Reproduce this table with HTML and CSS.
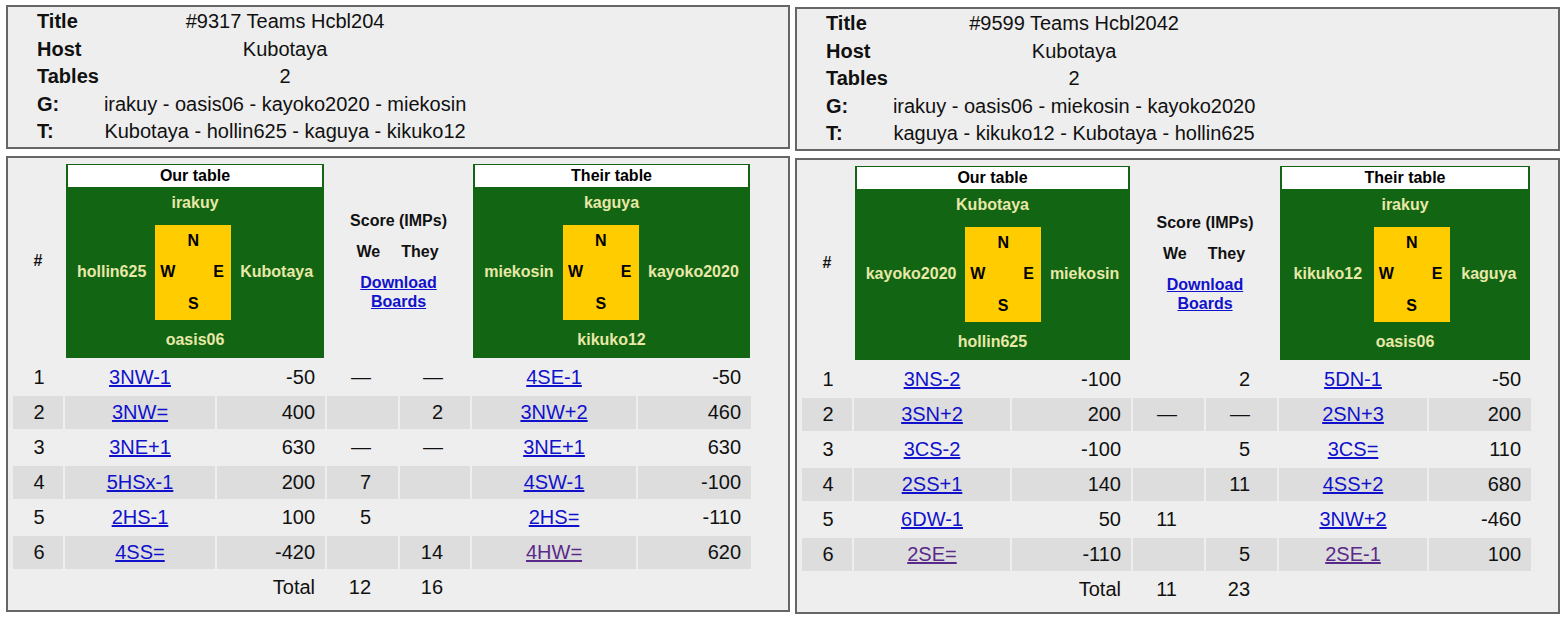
FILE: index.html
```html
<!DOCTYPE html>
<html>
<head>
<meta charset="utf-8">
<title>Teams results</title>
<link rel="stylesheet" href="styles.css">
</head>
<body>
<div class="page">
  <section class="col col-left">
    <div class="info">
      <table class="info-table">
        <tr><th>Title</th><td>#9317 Teams Hcbl204</td></tr>
        <tr><th>Host</th><td>Kubotaya</td></tr>
        <tr><th>Tables</th><td>2</td></tr>
        <tr><th>G:</th><td>irakuy - oasis06 - kayoko2020 - miekosin</td></tr>
        <tr><th>T:</th><td>Kubotaya - hollin625 - kaguya - kikuko12</td></tr>
      </table>
    </div>
    <div class="board">
      <table class="results res-left">
        <colgroup>
          <col class="w-num"><col class="w-con1"><col class="w-pts1"><col class="w-we"><col class="w-they"><col class="w-con2"><col class="w-pts2">
        </colgroup>
        <tr class="head">
          <th class="hash">#</th>
          <td colspan="2" class="seatcell">
            <div class="seat">
              <div class="seat-title">Our table</div>
              <div class="seat-n">irakuy</div>
              <div class="seat-mid"><span>hollin625</span><div class="compass"><b class="cn">N</b><b class="cw">W</b><b class="ce">E</b><b class="cs">S</b></div><span>Kubotaya</span></div>
              <div class="seat-s">oasis06</div>
            </div>
          </td>
          <td colspan="2" class="score-head">
            <div class="sh-title">Score (IMPs)</div>
            <div class="sh-sides"><span>We</span><span>They</span></div>
            <a class="dl" href="#">Download<br>Boards</a>
          </td>
          <td colspan="2" class="seatcell">
            <div class="seat">
              <div class="seat-title">Their table</div>
              <div class="seat-n">kaguya</div>
              <div class="seat-mid"><span>miekosin</span><div class="compass"><b class="cn">N</b><b class="cw">W</b><b class="ce">E</b><b class="cs">S</b></div><span>kayoko2020</span></div>
              <div class="seat-s">kikuko12</div>
            </div>
          </td>
        </tr>
        <tr><td class="n">1</td><td class="con"><a href="#">3NW-1</a></td><td class="pts">-50</td><td class="imp">—</td><td class="imp">—</td><td class="con"><a href="#">4SE-1</a></td><td class="pts">-50</td></tr>
        <tr class="alt"><td class="n">2</td><td class="con"><a href="#">3NW=</a></td><td class="pts">400</td><td class="imp"></td><td class="imp">2</td><td class="con"><a href="#">3NW+2</a></td><td class="pts">460</td></tr>
        <tr><td class="n">3</td><td class="con"><a href="#">3NE+1</a></td><td class="pts">630</td><td class="imp">—</td><td class="imp">—</td><td class="con"><a href="#">3NE+1</a></td><td class="pts">630</td></tr>
        <tr class="alt"><td class="n">4</td><td class="con"><a href="#">5HSx-1</a></td><td class="pts">200</td><td class="imp">7</td><td class="imp"></td><td class="con"><a href="#">4SW-1</a></td><td class="pts">-100</td></tr>
        <tr><td class="n">5</td><td class="con"><a href="#">2HS-1</a></td><td class="pts">100</td><td class="imp">5</td><td class="imp"></td><td class="con"><a href="#">2HS=</a></td><td class="pts">-110</td></tr>
        <tr class="alt"><td class="n">6</td><td class="con"><a href="#">4SS=</a></td><td class="pts">-420</td><td class="imp"></td><td class="imp">14</td><td class="con"><a class="visited" href="#">4HW=</a></td><td class="pts">620</td></tr>
        <tr><td></td><td></td><td class="pts">Total</td><td class="imp">12</td><td class="imp">16</td><td></td><td></td></tr>
      </table>
    </div>
  </section>

  <section class="col col-right">
    <div class="info">
      <table class="info-table">
        <tr><th>Title</th><td>#9599 Teams Hcbl2042</td></tr>
        <tr><th>Host</th><td>Kubotaya</td></tr>
        <tr><th>Tables</th><td>2</td></tr>
        <tr><th>G:</th><td>irakuy - oasis06 - miekosin - kayoko2020</td></tr>
        <tr><th>T:</th><td>kaguya - kikuko12 - Kubotaya - hollin625</td></tr>
      </table>
    </div>
    <div class="board">
      <table class="results res-right">
        <colgroup>
          <col class="w-num"><col class="w-con1"><col class="w-pts1"><col class="w-we"><col class="w-they"><col class="w-con2"><col class="w-pts2">
        </colgroup>
        <tr class="head">
          <th class="hash">#</th>
          <td colspan="2" class="seatcell">
            <div class="seat">
              <div class="seat-title">Our table</div>
              <div class="seat-n">Kubotaya</div>
              <div class="seat-mid"><span>kayoko2020</span><div class="compass"><b class="cn">N</b><b class="cw">W</b><b class="ce">E</b><b class="cs">S</b></div><span>miekosin</span></div>
              <div class="seat-s">hollin625</div>
            </div>
          </td>
          <td colspan="2" class="score-head">
            <div class="sh-title">Score (IMPs)</div>
            <div class="sh-sides"><span>We</span><span>They</span></div>
            <a class="dl" href="#">Download<br>Boards</a>
          </td>
          <td colspan="2" class="seatcell">
            <div class="seat">
              <div class="seat-title">Their table</div>
              <div class="seat-n">irakuy</div>
              <div class="seat-mid"><span>kikuko12</span><div class="compass"><b class="cn">N</b><b class="cw">W</b><b class="ce">E</b><b class="cs">S</b></div><span>kaguya</span></div>
              <div class="seat-s">oasis06</div>
            </div>
          </td>
        </tr>
        <tr><td class="n">1</td><td class="con"><a href="#">3NS-2</a></td><td class="pts">-100</td><td class="imp"></td><td class="imp">2</td><td class="con"><a href="#">5DN-1</a></td><td class="pts">-50</td></tr>
        <tr class="alt"><td class="n">2</td><td class="con"><a href="#">3SN+2</a></td><td class="pts">200</td><td class="imp">—</td><td class="imp">—</td><td class="con"><a href="#">2SN+3</a></td><td class="pts">200</td></tr>
        <tr><td class="n">3</td><td class="con"><a href="#">3CS-2</a></td><td class="pts">-100</td><td class="imp"></td><td class="imp">5</td><td class="con"><a href="#">3CS=</a></td><td class="pts">110</td></tr>
        <tr class="alt"><td class="n">4</td><td class="con"><a href="#">2SS+1</a></td><td class="pts">140</td><td class="imp"></td><td class="imp">11</td><td class="con"><a href="#">4SS+2</a></td><td class="pts">680</td></tr>
        <tr><td class="n">5</td><td class="con"><a href="#">6DW-1</a></td><td class="pts">50</td><td class="imp">11</td><td class="imp"></td><td class="con"><a href="#">3NW+2</a></td><td class="pts">-460</td></tr>
        <tr class="alt"><td class="n">6</td><td class="con"><a class="visited" href="#">2SE=</a></td><td class="pts">-110</td><td class="imp"></td><td class="imp">5</td><td class="con"><a class="visited" href="#">2SE-1</a></td><td class="pts">100</td></tr>
        <tr><td></td><td></td><td class="pts">Total</td><td class="imp">11</td><td class="imp">23</td><td></td><td></td></tr>
      </table>
    </div>
  </section>
</div>
</body>
</html>
```

FILE: styles.css
```css
html, body {
  margin: 0;
  padding: 0;
  background: #ffffff;
}

body {
  font-family: "Liberation Sans", Arial, sans-serif;
  color: #111;
}

.page {
  display: flex;
  align-items: flex-start;
  gap: 5px;
  padding: 5px 0 0 6px;
}

.col {
  display: flex;
  flex-direction: column;
  gap: 7px;
}

.col-left { width: 784px; }
.col-right { width: 765px; margin-top: 2px; }

.info,
.board {
  background: #eeeeee;
  border: 2px solid #666666;
}

.info {
  padding: 1px 0 1px 29px;
}

.info-table {
  border-collapse: collapse;
  font-size: 20px;
  line-height: 27.5px;
}

.info-table th {
  text-align: left;
  font-weight: bold;
  padding: 0 5px 0 0;
}

.info-table td {
  text-align: center;
  padding: 0;
}

.board {
  padding: 3px 3px 4px 3px;
}

.results {
  table-layout: fixed;
  border-collapse: separate;
  border-spacing: 2px;
  font-size: 20px;
}

.res-left { width: 742px; }
.res-right { width: 733px; }

.res-left .w-num { width: 50px; }
.res-left .w-con1 { width: 150px; }
.res-left .w-pts1 { width: 108px; }
.res-left .w-we { width: 71px; }
.res-left .w-they { width: 70px; }
.res-left .w-con2 { width: 164px; }
.res-left .w-pts2 { width: 113px; }

.res-right .w-num { width: 50px; }
.res-right .w-con1 { width: 156px; }
.res-right .w-pts1 { width: 119px; }
.res-right .w-we { width: 71px; }
.res-right .w-they { width: 71px; }
.res-right .w-con2 { width: 148px; }
.res-right .w-pts2 { width: 102px; }

.results td,
.results th {
  padding: 0;
  height: 33px;
  vertical-align: middle;
}

.results .head th,
.results .head td {
  height: auto;
}

.hash {
  font-size: 16px;
  font-weight: bold;
  text-align: center;
}

.seatcell {
  padding: 1px !important;
}

.seat {
  background: #126512;
  height: 194px;
  box-sizing: border-box;
  padding: 1px 2px 2px 2px;
  display: flex;
  flex-direction: column;
  font-size: 16px;
  font-weight: bold;
  color: #e8e8a8;
}

.seat-title {
  background: #ffffff;
  color: #000;
  height: 22px;
  line-height: 22px;
  text-align: center;
}

.seat-n {
  height: 38px;
  box-sizing: border-box;
  padding-bottom: 6px;
  display: flex;
  align-items: center;
  justify-content: center;
}

.seat-mid {
  height: 95px;
  display: flex;
  align-items: center;
  justify-content: space-evenly;
}

.seat-s {
  flex: 1;
  padding-top: 4px;
  display: flex;
  align-items: center;
  justify-content: center;
}

.compass {
  width: 76px;
  height: 95px;
  background: #ffcc00;
  color: #000;
  display: grid;
  grid-template-columns: repeat(3, 1fr);
  grid-template-rows: repeat(3, 1fr);
  align-items: center;
  justify-items: center;
}

.cn { grid-column: 2; grid-row: 1; padding-top: 2px; }
.cw { grid-column: 1; grid-row: 2; }
.ce { grid-column: 3; grid-row: 2; }
.cs { grid-column: 2; grid-row: 3; }

.score-head {
  text-align: center;
  font-size: 16px;
  font-weight: bold;
  line-height: 19px;
}

.sh-title {
  margin-bottom: 12px;
}

.sh-sides {
  display: flex;
  justify-content: center;
  gap: 21px;
  margin-bottom: 12px;
  padding-right: 2px;
}

.dl {
  color: #1111cc;
  text-decoration: underline;
}

.alt td {
  background: #dddddd;
}

.n {
  text-align: center;
  padding-left: 2px !important;
}

.con {
  text-align: center;
}

.con a {
  color: #1111cc;
  text-decoration: underline;
}

.con a.visited {
  color: #5a2a8a;
}

.pts {
  text-align: right;
  padding-right: 10px !important;
}

.imp {
  text-align: right;
  padding-right: 27px !important;
}
```
